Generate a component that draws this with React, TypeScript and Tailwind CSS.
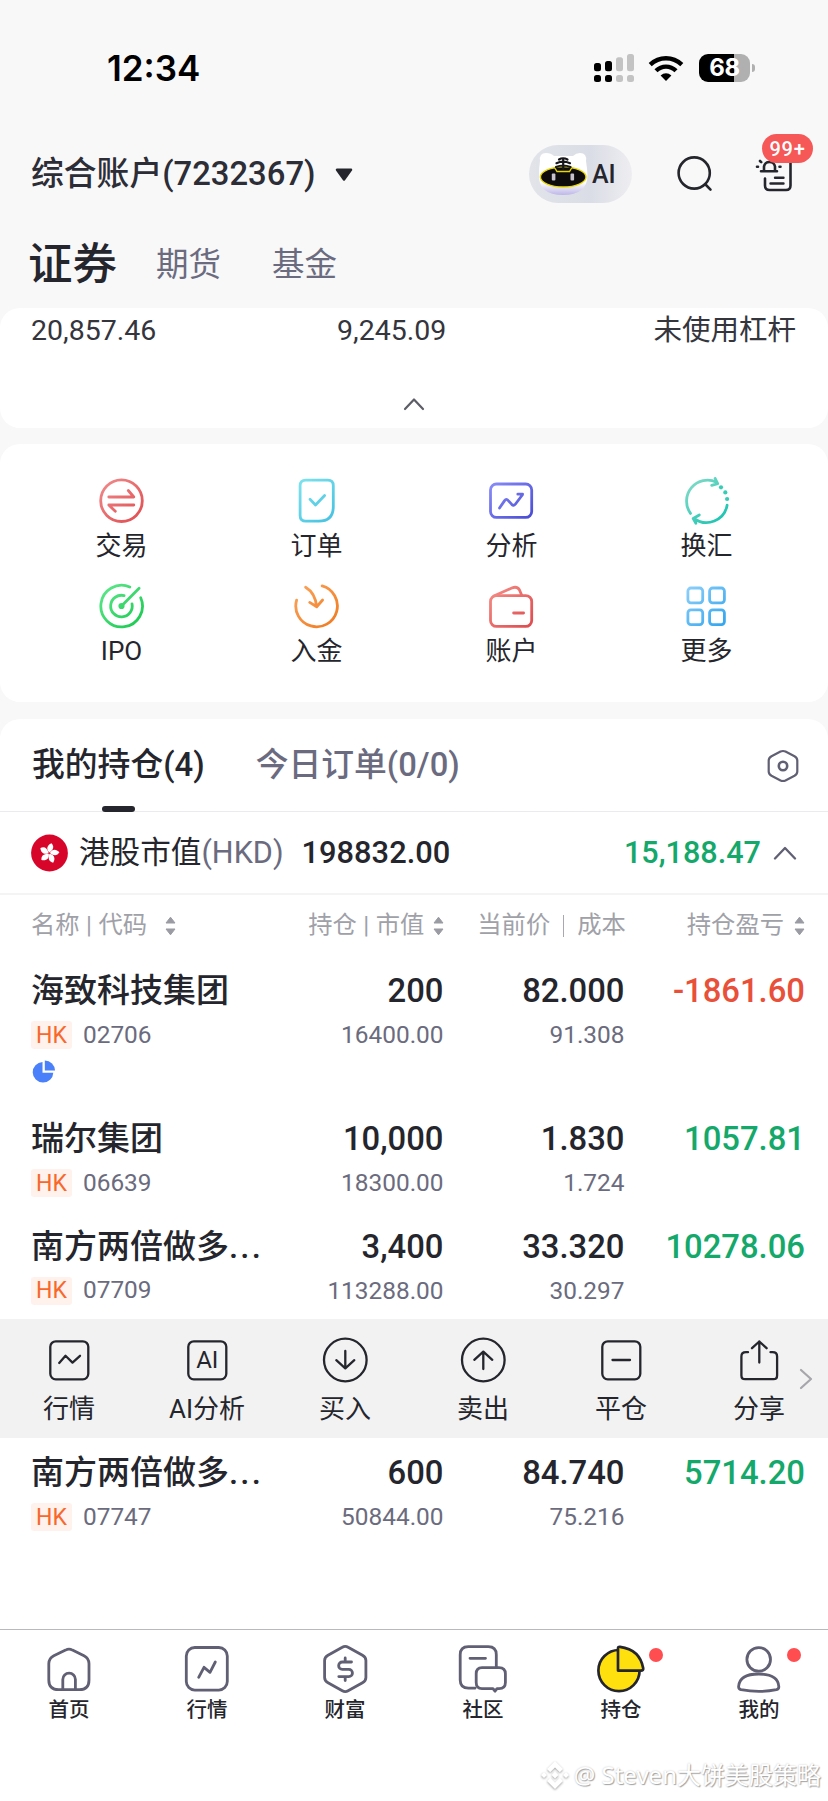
import React from 'react';

const RED = '#e8503a';
const GREEN = '#14a86b';

type Holding = {
  name: string;
  cut?: boolean;
  code: string;
  qty: string;
  value: string;
  price: string;
  cost: string;
  pnl: string;
  pie?: boolean;
};

const HOLDINGS: Holding[] = [
  { name: '海致科技集团', code: '02706', qty: '200', value: '16400.00', price: '82.000', cost: '91.308', pnl: '-1861.60', pie: true },
  { name: '瑞尔集团', code: '06639', qty: '10,000', value: '18300.00', price: '1.830', cost: '1.724', pnl: '1057.81' },
  { name: '南方两倍做多', cut: true, code: '07709', qty: '3,400', value: '113288.00', price: '33.320', cost: '30.297', pnl: '10278.06' },
];

const LAST_HOLDING: Holding = {
  name: '南方两倍做多', cut: true, code: '07747', qty: '600', value: '50844.00', price: '84.740', cost: '75.216', pnl: '5714.20',
};

/* ---------- shared bits ---------- */

const Grad = ({ id, from, to }: { id: string; from: string; to: string }) => (
  <defs>
    <linearGradient id={id} x1="4" y1="4" x2="44" y2="46" gradientUnits="userSpaceOnUse">
      <stop offset="0" stopColor={from} />
      <stop offset="1" stopColor={to} />
    </linearGradient>
  </defs>
);

const GridSvg = ({ id, from, to, children }: { id: string; from: string; to: string; children: React.ReactNode }) => (
  <svg width="48" height="48" viewBox="0.7 0 48 48" fill="none" stroke={`url(#${id})`} strokeWidth="2.8" strokeLinecap="round" strokeLinejoin="round">
    <Grad id={id} from={from} to={to} />
    {children}
  </svg>
);

const ToolSvg = ({ children }: { children: React.ReactNode }) => (
  <svg width="48" height="48" viewBox="0 0 48 48" fill="none" stroke="#25262d" strokeWidth="2.3" strokeLinecap="round" strokeLinejoin="round">
    {children}
  </svg>
);

const NavSvg = ({ children }: { children: React.ReactNode }) => (
  <svg width="50" height="52" viewBox="0 0 50 52" fill="none" stroke="#605f73" strokeWidth="2.8" strokeLinecap="round" strokeLinejoin="round" className="overflow-visible">
    {children}
  </svg>
);

const SortIcon = () => (
  <svg width="11" height="20" viewBox="0 0 11 20" fill="#9a9ba3" stroke="#9a9ba3" strokeLinejoin="round">
    <path d="M5.5 1.2 10 7H1z" />
    <path d="M5.5 18.8 10 13H1z" />
  </svg>
);

/* ---------- data for the icon rows ---------- */

const SHORTCUTS = [
  {
    label: '交易',
    icon: (
      <GridSvg id="g-trade" from="#f08a8a" to="#e04b4f">
        <circle cx="24.2" cy="23.7" r="20.8" />
        <path d="M11.5 20H36.5L31 13.5M36.5 28H11.5L18 34.3" />
      </GridSvg>
    ),
  },
  {
    label: '订单',
    icon: (
      <GridSvg id="g-order" from="#7fe3ee" to="#41bfe0">
        <path d="M13.5 3.2H35.5Q41 3.2 41 8.7V29.5Q41 44.2 26.5 44.2H13.5Q7.8 44.2 7.8 38.5V8.7Q7.8 3.2 13.5 3.2Z" />
        <path d="M17.7 22.3 23.2 28 32.3 18.5" />
      </GridSvg>
    ),
  },
  {
    label: '分析',
    icon: (
      <GridSvg id="g-analysis" from="#8a8df8" to="#4548d2">
        <rect x="3.2" y="7" width="41.2" height="33.4" rx="6" />
        <path d="M12.2 31 17.3 23.6Q19 21.3 21 23.6L24.5 27.4Q26.4 29.3 28.2 27L35 18M30.5 17.2H35.3" />
      </GridSvg>
    ),
  },
  {
    label: '换汇',
    icon: (
      <GridSvg id="g-fx" from="#86dcc8" to="#12c2b0">
        <path d="M8.2 36.4A21 21 0 0 1 34.3 5.2M32.8 1.400 35.4 6.6 29.4 8.4" />
        <path d="M44.8 28.2A21 21 0 0 1 11.8 41.5M17 38 10.9 41.5 13.6 46.2" />
        <g fill="#35cdb6" stroke="none">
          <circle cx="38.7" cy="10.3" r="2.100" />
          <circle cx="43" cy="15.4" r="2.100" />
          <circle cx="44.8" cy="22" r="2.100" />
        </g>
      </GridSvg>
    ),
  },
  {
    label: 'IPO',
    icon: (
      <GridSvg id="g-ipo" from="#5fe88c" to="#17c84e">
        <path d="M32.5 5A20.8 20.8 0 1 0 43.4 15.8" />
        <path d="M26.8 13.6A10.8 10.8 0 1 0 34.7 21.8" />
        <path d="M24.2 24 41.8 6.3" />
        <circle cx="24.2" cy="24" r="1.7" fill="#2fd566" />
      </GridSvg>
    ),
  },
  {
    label: '入金',
    icon: (
      <GridSvg id="g-deposit" from="#fba35c" to="#ef7a1e">
        <path d="M29.8 3.9A20.8 20.8 0 1 1 4.3 18.2" />
        <path d="M13.3 5.2Q23 11 24.3 24.5M17.4 20.4 24.4 24.7 30.3 18" />
      </GridSvg>
    ),
  },
  {
    label: '账户',
    icon: (
      <GridSvg id="g-account" from="#f58e86" to="#de4a4e">
        <rect x="3.2" y="13.6" width="41.2" height="30.8" rx="6" />
        <path d="M6.5 14 24.5 6Q30 3.8 32.3 8.2L34.3 13" />
        <path d="M26.3 31H36.3" />
      </GridSvg>
    ),
  },
  {
    label: '更多',
    icon: (
      <GridSvg id="g-more" from="#8fd0fa" to="#2ba3ee">
        <rect x="5.6" y="6" width="14.8" height="14.8" rx="3" />
        <rect x="27.3" y="6" width="14.8" height="14.8" rx="3" />
        <rect x="5.6" y="27.8" width="14.8" height="14.8" rx="3" />
        <rect x="27.3" y="27.8" width="14.8" height="14.8" rx="3" />
      </GridSvg>
    ),
  },
];

const TOOLS = [
  {
    label: '行情',
    icon: <ToolSvg><rect x="5.3" y="5.3" width="38" height="38" rx="5.5" /><path d="M14.2 27 20.5 19.8 27.5 26.6 35 19.8" /></ToolSvg>,
  },
  {
    label: 'AI分析',
    icon: (
      <ToolSvg>
        <rect x="5.3" y="5.3" width="38" height="38" rx="5.5" />
        <text x="24.3" y="32.3" textAnchor="middle" fontSize="24" fill="#25262d" stroke="none">AI</text>
      </ToolSvg>
    ),
  },
  {
    label: '买入',
    icon: <ToolSvg><circle cx="24.3" cy="24" r="21.3" /><path d="M24.3 15V32.3M15.3 24.2 24.3 32.3 33.3 24.2" /></ToolSvg>,
  },
  {
    label: '卖出',
    icon: <ToolSvg><circle cx="24.3" cy="24" r="21.3" /><path d="M24.3 33V15.7M15.3 23.8 24.3 15.7 33.3 23.8" /></ToolSvg>,
  },
  {
    label: '平仓',
    icon: <ToolSvg><rect x="5.3" y="5.3" width="38" height="38" rx="5.5" /><path d="M15.5 24H33" /></ToolSvg>,
  },
  {
    label: '分享',
    icon: (
      <ToolSvg>
        <path d="M13 16.2H11Q6.4 16.2 6.4 20.5V39.5Q6.4 43.2 10 43.2H38.5Q42.1 43.2 42.1 39.5V20.5Q42.1 16.2 37.5 16.2H35.5" />
        <path d="M24.3 26.5V5.5M17 12.2 24.3 5.5 31.6 12.2" />
      </ToolSvg>
    ),
  },
];

const NAV = [
  {
    label: '首页',
    icon: (
      <NavSvg>
        <path d="M21.6 7.1Q25 5.2 28.4 7.1L40 12.8Q45 15.4 45 20.8V37Q45 46.7 35.5 46.7H14.5Q4.8 46.7 4.8 37V20.8Q4.8 15.4 9.8 12.8Z" />
        <path d="M18.8 46.5V36.5A6.3 6.3 0 0 1 31.4 36.5V46.5" />
      </NavSvg>
    ),
  },
  {
    label: '行情',
    icon: <NavSvg><rect x="4.3" y="4.5" width="41" height="42.6" rx="8.5" /><path d="M16.7 34.3 22 24.3 28 29.3 33.3 19" /></NavSvg>,
  },
  {
    label: '财富',
    icon: (
      <NavSvg>
        <path d="M22.3 4.2Q25.2 2.4 28.1 4.2L42.5 12.3Q45.9 14.2 45.9 17.5V34.5Q45.9 37.8 42.5 39.7L28.1 47.8Q25.2 49.6 22.3 47.8L8 39.7Q4.6 37.8 4.6 34.5V17.5Q4.6 14.2 8 12.3Z" />
        <path d="M31.5 19H22.3A3.6 3.6 0 0 0 22.3 26.3H28.8A3.6 3.6 0 0 1 28.8 33.6H18.8M25.2 15V18.5M25.2 34V37.6" />
      </NavSvg>
    ),
  },
  {
    label: '社区',
    icon: (
      <NavSvg>
        <path d="M17 45.2H10.5Q2.2 45.2 2.2 37V11.8Q2.2 3.7 10.3 3.7H30.3Q38.3 3.7 38.3 11.8V24M12 15.3H27.5" />
        <path d="M24 24.6H41Q47.4 24.6 47.4 30.8V39.5Q47.4 45.6 41 45.6H39L37 48.2 35 45.6H24Q18.2 45.6 18.2 39.5V30.8Q18.2 24.6 24 24.6Z" />
      </NavSvg>
    ),
  },
  {
    label: '持仓',
    dot: true,
    icon: (
      <NavSvg>
        <g fill="#ffe00f" stroke="#25262d" strokeWidth="2.7">
          <circle cx="23" cy="27.6" r="20.6" />
          <path d="M22 27.6V5.5Q22 3.6 24 3.8Q44 6.5 47.2 25.3Q47.5 27.6 45 27.6Z" />
        </g>
      </NavSvg>
    ),
  },
  {
    label: '我的',
    dot: true,
    icon: (
      <NavSvg>
        <circle cx="24.7" cy="16.4" r="11.8" />
        <path d="M4.6 43.5Q5.5 31 24.7 31Q44 31 44.8 43.5Q45 46 42.5 46.7Q25 50.2 7 46.7Q4.5 46 4.6 43.5Z" />
      </NavSvg>
    ),
  },
];

/* ---------- sections ---------- */

const StatusBar = () => (
  <div className="flex h-[136px] items-center justify-between pl-[107px] pr-[73px]">
    <span className="font-['Inter'] text-[35px] font-semibold leading-none text-black">12:34</span>
    <div className="flex items-center">
      <svg width="41" height="28" viewBox="0 0 41 28">
        <g fill="#000">
          <rect x="0" y="9" width="7" height="8.3" rx="2.5" />
          <rect x="0" y="21" width="7" height="7" rx="2.5" />
          <rect x="11" y="7" width="7" height="10.3" rx="2.5" />
          <rect x="11" y="21" width="7" height="7" rx="2.5" />
        </g>
        <g fill="#c3c3c3">
          <rect x="22" y="3.3" width="7" height="14" rx="2.5" />
          <rect x="22" y="21" width="7" height="7" rx="2.5" />
          <rect x="33" y="0" width="7" height="17.3" rx="2.5" />
          <rect x="33" y="21" width="7" height="7" rx="2.5" />
        </g>
      </svg>
      <svg width="36" height="27" viewBox="0 0 36 27" fill="none" stroke="#000" strokeWidth="4.4" className="ml-[13px]">
        <path d="M2.2 9.6Q9 3.2 18 3.2T33.8 9.6" />
        <path d="M8 15.8Q12.3 11.6 18 11.6T28 15.8" />
        <path d="M18 26 12.6 20.5Q15 18.2 18 18.2T23.4 20.5Z" fill="#000" stroke="none" />
      </svg>
      <div className="ml-[15px] flex h-[28px] w-[51px] items-center justify-center rounded-[9px] bg-[linear-gradient(90deg,#000_69%,#b0b0b0_69%)]">
        <span className="font-['Inter'] text-[24px] font-bold leading-none tracking-[-0.3px] text-white">68</span>
      </div>
      <div className="ml-[2px] h-[8px] w-[3px] rounded-r-full bg-[#b0b0b0]" />
    </div>
  </div>
);

const AiPill = () => (
  <div className="flex h-[58px] w-[103px] items-center rounded-full bg-[linear-gradient(90deg,#e2e4ea,#dbdde6_60%,#eeeef1)] pl-[8px]">
    <svg width="54" height="50" viewBox="0 0 54 50">
      <defs>
        <linearGradient id="head" x1="0" y1="0" x2="0" y2="1">
          <stop offset="0.7" stopColor="#ffffff" />
          <stop offset="1" stopColor="#bdb6e8" />
        </linearGradient>
      </defs>
      <path d="M3 12Q2 4 9 4Q14 4 17 7H36Q39 4 43 4Q50 4 49 12Q50 18 50.5 26Q50.500 46 26 46T2 26Q2 18 3 12Z" fill="url(#head)" />
      <path d="M18 17 20.500 23H32L34.500 17Z" fill="#f4f2ee" />
      <ellipse cx="26.2" cy="28" rx="22.8" ry="10" fill="#0d0b0c" stroke="#e8d800" strokeWidth="1.4" />
      <path d="M17.500 18.400 20 22.500H32.500L35 18.400Z" fill="#0d0b0c" />
      <path d="M17.500 18.400 20 22.500H32.500L35 18.400" fill="none" stroke="#e8d800" strokeWidth="1.300" />
      <path d="M22 10.500Q26 8 30.500 10.500M19.500 14.200Q26 11 33 14.200M19 18Q26 15 33.500 18M26.200 10V20" fill="none" stroke="#17171b" strokeWidth="2.200" strokeLinecap="round" />
      <rect x="14.800" y="24.500" width="3.600" height="7" rx="1" fill="#c9c3cb" />
      <rect x="33.500" y="24.500" width="3.600" height="7" rx="1" fill="#c9c3cb" />
    </svg>
    <span className="ml-px text-[25px] font-medium leading-none text-[#25262d]">AI</span>
  </div>
);

const Header = () => (
  <header className="flex h-[76px] items-center pl-[31px]">
    <span className="text-[32.800px] font-medium leading-[48px] text-[#2c2d36]">综合账户(7232367)</span>
    <svg width="20" height="14" viewBox="0 0 20 14" className="ml-[18px] mt-[2px]">
      <path d="M3 1.800H17L10 11.500Z" fill="#25262d" stroke="#25262d" strokeWidth="2.500" strokeLinejoin="round" />
    </svg>
    <div className="flex-1" />
    <AiPill />
    <svg width="38" height="38" viewBox="0 0 38 38" fill="none" stroke="#25262d" strokeWidth="2.6" strokeLinecap="round" className="ml-[44px]">
      <circle cx="18.200" cy="18" r="15.6" />
      <path d="M29.500 29.500 34.500 34.600" />
    </svg>
    <div className="relative ml-[41px] mr-[31px] h-[42px] w-[42px]">
      <svg width="42" height="42" viewBox="0 0 42 42" fill="none" stroke="#25262d" strokeWidth="2.6" strokeLinecap="round" strokeLinejoin="round">
        <path d="M10 25.500V32.500Q10 37 14.500 37H31Q35.500 37 35.500 32.500V5" />
        <path d="M15.500 30.500H28.500M20 24.800H28.500" strokeWidth="2.4" />
        <path d="M6 18.200H22M9 18V13.500A5.600 5.600 0 0 1 20 13.500V18" />
        <path d="M2 13.800H3M5 8 6.200 9.200M24.500 13.800H25.500" />
      </svg>
      <span className="absolute -top-[19px] left-[7px] flex h-[29px] w-[51px] items-center justify-center rounded-full bg-[#f65757] text-[20px] font-medium leading-none tracking-[0.8px] text-white">99+</span>
    </div>
  </header>
);

const HoldingRow = ({ item }: { item: Holding }) => (
  <div className={`flex pl-[31px] pr-[23px] pt-[13px] ${item.pie ? 'h-[148px]' : 'h-[107.5px]'}`}>
    <div className="w-[240px]">
      <div className="flex h-[44px] items-center whitespace-nowrap text-[33px] font-medium text-[#25262d]">
        {item.name}
        {item.cut && <span className="tracking-[2.200px]">...</span>}
      </div>
      <div className="flex h-[44px] items-center">
        <span className="flex h-[28px] w-[41px] items-center justify-center rounded-[3px] bg-[#fff2ed] text-[23px] leading-none text-[#f8682c]">HK</span>
        <span className="ml-[11px] text-[24.4px] leading-none text-[#6b6b7e]">{item.code}</span>
      </div>
      {item.pie && (
        <svg width="24" height="24" viewBox="0 0 24 24" fill="#4a80fa" className="ml-px mt-[3px]">
          <path d="M10.500 2A10.300 10.300 0 1 0 21.300 12.700H10.500Z" />
          <path d="M12.800.500A10.200 10.200 0 0 1 23 10.600H12.800Z" />
        </svg>
      )}
    </div>
    <div className="w-[172.500px] text-right">
      <div className="h-[44px] text-[32.800px] font-medium leading-[44px] text-[#25262d]">{item.qty}</div>
      <div className="h-[44px] text-[24.4px] leading-[44px] text-[#6b6b7e]">{item.value}</div>
    </div>
    <div className="w-[181px] text-right">
      <div className="h-[44px] text-[32.800px] font-medium leading-[44px] text-[#25262d]">{item.price}</div>
      <div className="h-[44px] text-[24.4px] leading-[44px] text-[#6b6b7e]">{item.cost}</div>
    </div>
    <div className="flex-1 text-right text-[32.800px] font-medium leading-[44px]" style={{ color: item.pnl.startsWith('-') ? RED : GREEN }}>
      {item.pnl}
    </div>
  </div>
);

function App() {
  return (
    <div className="flex h-[1801px] w-[828px] flex-col overflow-hidden bg-[#f8f8f8] font-['Roboto','Noto_Sans_CJK_SC',sans-serif] text-[#25262d]">
      <StatusBar />
      <Header />

      <nav className="flex h-[96px] items-center pl-[28px] pt-[9px] leading-[60px]">
        <span className="text-[44.500px] font-medium">证券</span>
        <span className="ml-[39px] text-[32.500px] text-[#6b6b80]">期货</span>
        <span className="ml-[51px] text-[32.500px] text-[#6b6b80]">基金</span>
      </nav>

      {/* Account summary, scrolled half out of view */}
      <section className="h-[120px] rounded-[20px] bg-white">
        <div className="grid grid-cols-3 pl-[31px] pr-[32px] pt-px text-[28.500px] leading-[44px] text-[#34353d]">
          <span>20,857.46</span>
          <span className="pl-[51px]">9,245.09</span>
          <span className="text-right">未使用杠杆</span>
        </div>
        <svg width="22" height="14" viewBox="0 0 22 14" fill="none" stroke="#5c5d66" strokeWidth="2.200" strokeLinecap="round" strokeLinejoin="round" className="mx-auto mt-[44px]">
          <path d="M2 12 11 2.500 20 12" />
        </svg>
      </section>

      {/* Shortcuts */}
      <section className="mt-[16px] grid h-[258px] grid-cols-4 content-start gap-y-[9px] rounded-[20px] bg-white px-[24px] pt-[33px]">
        {SHORTCUTS.map((s) => (
          <div key={s.label} className="flex h-[96px] flex-col items-center">
            {s.icon}
            <span className="mt-px text-[26px] leading-[40px]">{s.label}</span>
          </div>
        ))}
      </section>

      {/* Positions */}
      <section className="mt-[17px] flex flex-1 flex-col rounded-t-[20px] bg-white">
        <div className="flex h-[93px] items-center border-b border-[#ebebed] pl-[32px] pr-[28px] pt-[2px] text-[32.800px] font-medium">
          <div className="relative flex h-full items-center">
            我的持仓(4)
            <span className="absolute -bottom-[1px] left-[70px] h-[6px] w-[33px] rounded-full bg-[#25262d]" />
          </div>
          <span className="ml-[51px] text-[#6b6b80]">今日订单(0/0)</span>
          <svg width="34" height="34" viewBox="0 0 34 34" fill="none" stroke="#605f73" strokeWidth="2.200" strokeLinejoin="round" className="ml-auto">
            <path d="M14.500 2.600Q17 1.400 19.500 2.600L28.500 7.200Q31.300 8.800 31.300 11.500V22.500Q31.300 25.200 28.500 26.800L19.500 31.400Q17 32.600 14.500 31.400L5.500 26.800Q2.700 25.200 2.700 22.500V11.500Q2.700 8.800 5.500 7.200Z" />
            <circle cx="17" cy="17" r="4.200" strokeWidth="2.600" />
          </svg>
        </div>

        <div className="flex h-[83px] items-center border-b-2 border-[#f4f4f5] pl-[31px] pr-[31px] pt-px">
          <svg width="38" height="38" viewBox="0 0 38 38">
            <circle cx="18.500" cy="19" r="18.400" fill="#d8052b" />
            {[0, 72, 144, 216, 288].map((deg) => (
              <path key={deg} d="M18.200 18.600C14.400 15.800 14.800 11.500 19.100 9C22.400 11.800 22.100 15 18.200 18.600Z" fill="#fff" transform={`rotate(${deg + 8} 18.200 19.200)`} />
            ))}
          </svg>
          <span className="ml-[10px] text-[30.600px] leading-[44px]">
            港股市值<span className="text-[#6b6b80]">(HKD)</span>
          </span>
          <span className="ml-[18px] text-[30.800px] font-medium">198832.00</span>
          <span className="ml-auto text-[30.600px] font-medium text-[#14a86b]">15,188.47</span>
          <svg width="24" height="14" viewBox="0 0 24 14" fill="none" stroke="#605f73" strokeWidth="2.300" strokeLinecap="round" strokeLinejoin="round" className="ml-[12px]">
            <path d="M2 12.500 12 2 22 12.500" />
          </svg>
        </div>

        <div className="flex h-[61px] items-center pl-[31px] pr-[23px] text-[24.300px] text-[#a0a1a8]">
          <span>名称<span className="px-[6.500px]">|</span>代码</span>
          <span className="ml-[18px]"><SortIcon /></span>
          <div className="ml-auto flex items-center">
            <span>持仓<span className="px-[6.500px]">|</span>市值</span>
            <span className="ml-[9px]"><SortIcon /></span>
            <span className="ml-[33px]">当前价</span>
            <span className="mx-[13px] h-[22px] w-px bg-[#a8a9af]" />
            <span>成本</span>
            <span className="ml-[61px]">持仓盈亏</span>
            <span className="ml-[10px]"><SortIcon /></span>
          </div>
        </div>

        {HOLDINGS.map((h) => <HoldingRow key={h.code} item={h} />)}

        {/* Actions of the selected row */}
        <div className="relative grid h-[119px] grid-cols-6 bg-[#f2f2f2] pt-[17px]">
          {TOOLS.map((t) => (
            <div key={t.label} className="flex flex-col items-center">
              {t.icon}
              <span className="mt-[5px] text-[26px] leading-[40px]">{t.label}</span>
            </div>
          ))}
          <svg width="14" height="22" viewBox="0 0 14 22" fill="none" stroke="#a6a6ab" strokeWidth="2.200" strokeLinecap="round" strokeLinejoin="round" className="absolute right-[15px] top-[49px]">
            <path d="M2 2 12 11 2 20" />
          </svg>
        </div>

        <HoldingRow item={LAST_HOLDING} />
      </section>

      {/* Tab bar */}
      <footer className="relative h-[172px] border-t border-[#b9b9bc] bg-white">
        <div className="grid grid-cols-6 pt-[13px]">
          {NAV.map((n) => (
            <div key={n.label} className="flex flex-col items-center">
              <div className="relative">
                {n.icon}
                {n.dot && <span className="absolute -right-[17px] top-[5px] h-[14px] w-[14px] rounded-full bg-[#ff4d50]" />}
              </div>
              <span className="mt-px text-[20.500px] font-medium leading-[28px]">{n.label}</span>
            </div>
          ))}
        </div>
        <div className="absolute bottom-[10px] right-[7px] flex items-center gap-[4px] text-[24px] leading-[32px] text-white [text-shadow:1px_1px_1px_#a3a3a3,0_0_2px_#c4c4c4]">
          <svg width="30" height="30" viewBox="0 0 30 30" fill="#fff" className="drop-shadow-[0_1px_1px_#a0a0a0]">
            <path d="M15 1 23 9 19.800 12.200 15 7.400 10.200 12.200 7 9Z" />
            <path d="M15 29 23 21 19.800 17.800 15 22.600 10.200 17.800 7 21Z" />
            <path d="M15 11.500 18.500 15 15 18.500 11.500 15ZM4 12 7 15 4 18 1 15ZM26 12 29 15 26 18 23 15Z" />
          </svg>
          <span className="font-['Noto_Sans','Noto_Sans_CJK_SC',sans-serif]">@ Steven大饼美股策略</span>
        </div>
      </footer>
    </div>
  );
}

export default App;
